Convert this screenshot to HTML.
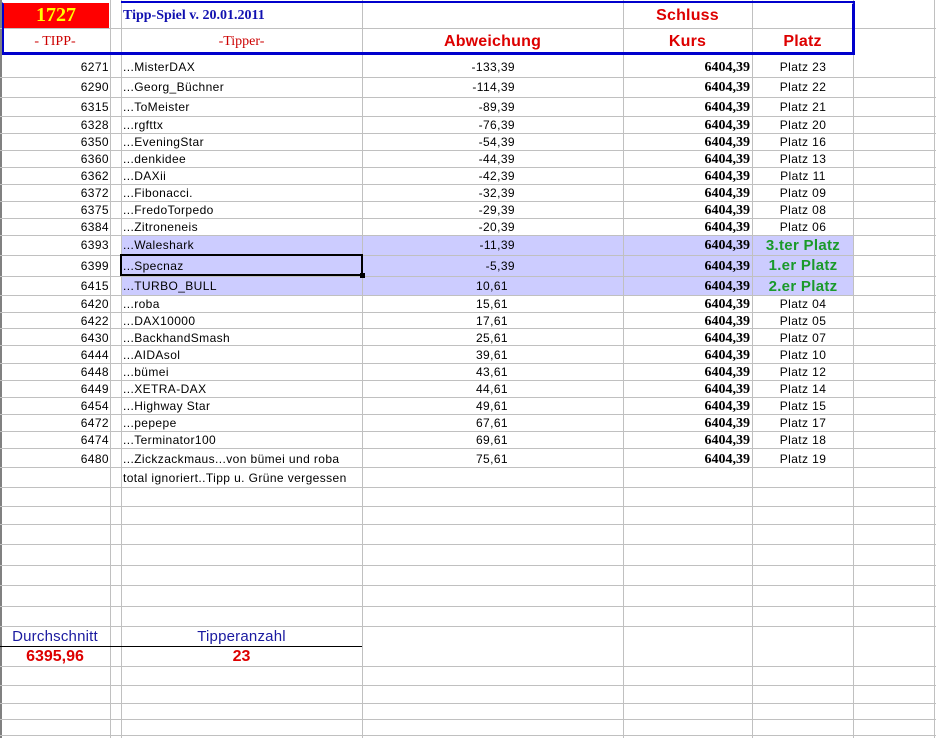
<!DOCTYPE html><html><head><meta charset="utf-8"><style>
*{margin:0;padding:0;box-sizing:border-box}
body{width:936px;height:738px;background:#fff;position:relative;overflow:hidden;font-family:"Liberation Sans",Arial,sans-serif;font-size:12px;color:#000;letter-spacing:0.4px}
.v{position:absolute;top:0;width:1px;height:738px;background:#c0c0c0}
.h{position:absolute;left:0;width:936px;height:1px;background:#c0c0c0}
.r{position:absolute;left:0;width:936px}
.r div{position:absolute;top:0;height:100%;display:flex;align-items:center;white-space:nowrap}
.a{left:0;width:109px;justify-content:flex-end}
.b{left:123px}
.c{left:380px;width:135px;justify-content:flex-end}
.cp{left:380px;width:128px;justify-content:flex-end}
.r .d{left:624px;width:126px;justify-content:flex-end;font-family:"Liberation Serif",serif;font-weight:bold;font-size:14px;letter-spacing:0;top:1px}
.e{left:753px;width:100px;justify-content:center}
.g{color:#1a9a2a;font-weight:bold;font-size:15px;letter-spacing:0.3px}
.hl{position:absolute;left:121px;top:235px;width:732px;height:61px;background:#ccccff}
</style></head><body>
<div class="hl"></div>
<div class="v" style="left:0;width:2px;background:#808080"></div>
<div class="v" style="left:110px"></div>
<div class="v" style="left:121px"></div>
<div class="v" style="left:362px"></div>
<div class="v" style="left:623px"></div>
<div class="v" style="left:752px"></div>
<div class="v" style="left:853px"></div>
<div class="v" style="left:934px"></div>
<div class="h" style="top:28px"></div>
<div class="h" style="top:77px"></div><div class="h" style="top:97px"></div><div class="h" style="top:116px"></div><div class="h" style="top:133px"></div><div class="h" style="top:150px"></div><div class="h" style="top:167px"></div><div class="h" style="top:184px"></div><div class="h" style="top:201px"></div><div class="h" style="top:218px"></div><div class="h" style="top:235px"></div><div class="h" style="top:255px"></div><div class="h" style="top:276px"></div><div class="h" style="top:295px"></div><div class="h" style="top:312px"></div><div class="h" style="top:328px"></div><div class="h" style="top:345px"></div><div class="h" style="top:363px"></div><div class="h" style="top:380px"></div><div class="h" style="top:397px"></div><div class="h" style="top:414px"></div><div class="h" style="top:431px"></div><div class="h" style="top:448px"></div><div class="h" style="top:467px"></div><div class="h" style="top:487px"></div><div class="h" style="top:506px"></div><div class="h" style="top:524px"></div><div class="h" style="top:544px"></div><div class="h" style="top:565px"></div><div class="h" style="top:585px"></div><div class="h" style="top:606px"></div><div class="h" style="top:626px"></div><div class="h" style="top:666px"></div><div class="h" style="top:685px"></div><div class="h" style="top:703px"></div><div class="h" style="top:719px"></div><div class="h" style="top:735px"></div>
<div style="position:absolute;left:0;top:646px;width:362px;height:1px;background:#000"></div>
<!-- header -->
<div style="position:absolute;left:3px;top:3px;width:106px;height:25px;background:#ff0000;color:#ffff00;font-family:'Liberation Serif',serif;font-weight:bold;font-size:20px;text-align:center;line-height:25px;letter-spacing:0">1727</div>
<div style="position:absolute;left:2px;top:2px;width:853px;height:53px;border:2px solid #0000cc;border-bottom-width:3px;border-right-width:3px;border-top-color:transparent"></div>
<div style="position:absolute;left:121px;top:1px;width:734px;height:2px;background:#0000cc"></div>
<div style="position:absolute;left:123px;top:8px;color:#1010b0;font-family:'Liberation Serif',serif;font-weight:bold;font-size:14px;letter-spacing:0">Tipp-Spiel v. 20.01.2011</div>
<div style="position:absolute;left:623px;top:7px;width:129px;text-align:center;color:#dd0000;font-weight:bold;font-size:16px;letter-spacing:0.2px">Schluss</div>
<div style="position:absolute;left:0;top:34px;width:110px;text-align:center;color:#cc0000;font-family:'Liberation Serif',serif;font-size:14px;letter-spacing:0">- TIPP-</div>
<div style="position:absolute;left:121px;top:34px;width:241px;text-align:center;color:#cc0000;font-family:'Liberation Serif',serif;font-size:14px;letter-spacing:0">-Tipper-</div>
<div style="position:absolute;left:362px;top:33px;width:261px;text-align:center;color:#dd0000;font-weight:bold;font-size:16px;letter-spacing:0.2px">Abweichung</div>
<div style="position:absolute;left:623px;top:33px;width:129px;text-align:center;color:#dd0000;font-weight:bold;font-size:16px;letter-spacing:0.2px">Kurs</div>
<div style="position:absolute;left:752px;top:33px;width:101px;text-align:center;color:#dd0000;font-weight:bold;font-size:16px;letter-spacing:0.2px">Platz</div>
<!-- rows -->
<div class="r" style="top:57px;height:20px"><div class="a">6271</div><div class="b">...MisterDAX</div><div class="c">-133,39</div><div class="d">6404,39</div><div class="e">Platz 23</div></div>
<div class="r" style="top:77px;height:20px"><div class="a">6290</div><div class="b">...Georg_Büchner</div><div class="c">-114,39</div><div class="d">6404,39</div><div class="e">Platz 22</div></div>
<div class="r" style="top:97px;height:19px"><div class="a">6315</div><div class="b">...ToMeister</div><div class="c">-89,39</div><div class="d">6404,39</div><div class="e">Platz 21</div></div>
<div class="r" style="top:116px;height:17px"><div class="a">6328</div><div class="b">...rgfttx</div><div class="c">-76,39</div><div class="d">6404,39</div><div class="e">Platz 20</div></div>
<div class="r" style="top:133px;height:17px"><div class="a">6350</div><div class="b">...EveningStar</div><div class="c">-54,39</div><div class="d">6404,39</div><div class="e">Platz 16</div></div>
<div class="r" style="top:150px;height:17px"><div class="a">6360</div><div class="b">...denkidee</div><div class="c">-44,39</div><div class="d">6404,39</div><div class="e">Platz 13</div></div>
<div class="r" style="top:167px;height:17px"><div class="a">6362</div><div class="b">...DAXii</div><div class="c">-42,39</div><div class="d">6404,39</div><div class="e">Platz 11</div></div>
<div class="r" style="top:184px;height:17px"><div class="a">6372</div><div class="b">...Fibonacci.</div><div class="c">-32,39</div><div class="d">6404,39</div><div class="e">Platz 09</div></div>
<div class="r" style="top:201px;height:17px"><div class="a">6375</div><div class="b">...FredoTorpedo</div><div class="c">-29,39</div><div class="d">6404,39</div><div class="e">Platz 08</div></div>
<div class="r" style="top:218px;height:17px"><div class="a">6384</div><div class="b">...Zitroneneis</div><div class="c">-20,39</div><div class="d">6404,39</div><div class="e">Platz 06</div></div>
<div class="r" style="top:235px;height:20px"><div class="a">6393</div><div class="b">...Waleshark</div><div class="c">-11,39</div><div class="d">6404,39</div><div class="e g">3.ter Platz</div></div>
<div class="r" style="top:255px;height:21px"><div class="a">6399</div><div class="b">...Specnaz</div><div class="c">-5,39</div><div class="d">6404,39</div><div class="e g">1.er Platz</div></div>
<div class="r" style="top:276px;height:20px"><div class="a">6415</div><div class="b">...TURBO_BULL</div><div class="cp">10,61</div><div class="d">6404,39</div><div class="e g">2.er Platz</div></div>
<div class="r" style="top:295px;height:17px"><div class="a">6420</div><div class="b">...roba</div><div class="cp">15,61</div><div class="d">6404,39</div><div class="e">Platz 04</div></div>
<div class="r" style="top:312px;height:17px"><div class="a">6422</div><div class="b">...DAX10000</div><div class="cp">17,61</div><div class="d">6404,39</div><div class="e">Platz 05</div></div>
<div class="r" style="top:329px;height:17px"><div class="a">6430</div><div class="b">...BackhandSmash</div><div class="cp">25,61</div><div class="d">6404,39</div><div class="e">Platz 07</div></div>
<div class="r" style="top:346px;height:17px"><div class="a">6444</div><div class="b">...AIDAsol</div><div class="cp">39,61</div><div class="d">6404,39</div><div class="e">Platz 10</div></div>
<div class="r" style="top:363px;height:17px"><div class="a">6448</div><div class="b">...bümei</div><div class="cp">43,61</div><div class="d">6404,39</div><div class="e">Platz 12</div></div>
<div class="r" style="top:380px;height:17px"><div class="a">6449</div><div class="b">...XETRA-DAX</div><div class="cp">44,61</div><div class="d">6404,39</div><div class="e">Platz 14</div></div>
<div class="r" style="top:397px;height:17px"><div class="a">6454</div><div class="b">...Highway Star</div><div class="cp">49,61</div><div class="d">6404,39</div><div class="e">Platz 15</div></div>
<div class="r" style="top:414px;height:17px"><div class="a">6472</div><div class="b">...pepepe</div><div class="cp">67,61</div><div class="d">6404,39</div><div class="e">Platz 17</div></div>
<div class="r" style="top:431px;height:17px"><div class="a">6474</div><div class="b">...Terminator100</div><div class="cp">69,61</div><div class="d">6404,39</div><div class="e">Platz 18</div></div>
<div class="r" style="top:449px;height:19px"><div class="a">6480</div><div class="b">...Zickzackmaus...von bümei und roba</div><div class="cp">75,61</div><div class="d">6404,39</div><div class="e">Platz 19</div></div>
<div class="r" style="top:468px;height:19px"><div class="b">total ignoriert..Tipp u. Grüne vergessen</div></div>
<!-- selection -->
<div style="position:absolute;left:120px;top:254px;width:243px;height:22px;border:2px solid #000"></div>
<div style="position:absolute;left:360px;top:273px;width:5px;height:5px;background:#000"></div>
<!-- bottom -->
<div style="position:absolute;left:0;top:628px;width:110px;text-align:center;color:#1a1aa0;font-size:15px;letter-spacing:0.2px">Durchschnitt</div>
<div style="position:absolute;left:121px;top:628px;width:241px;text-align:center;color:#1a1aa0;font-size:15px;letter-spacing:0.2px">Tipperanzahl</div>
<div style="position:absolute;left:0;top:648px;width:110px;text-align:center;color:#dd0000;font-weight:bold;font-size:16px;letter-spacing:0">6395,96</div>
<div style="position:absolute;left:121px;top:648px;width:241px;text-align:center;color:#dd0000;font-weight:bold;font-size:16px;letter-spacing:0">23</div>
</body></html>
